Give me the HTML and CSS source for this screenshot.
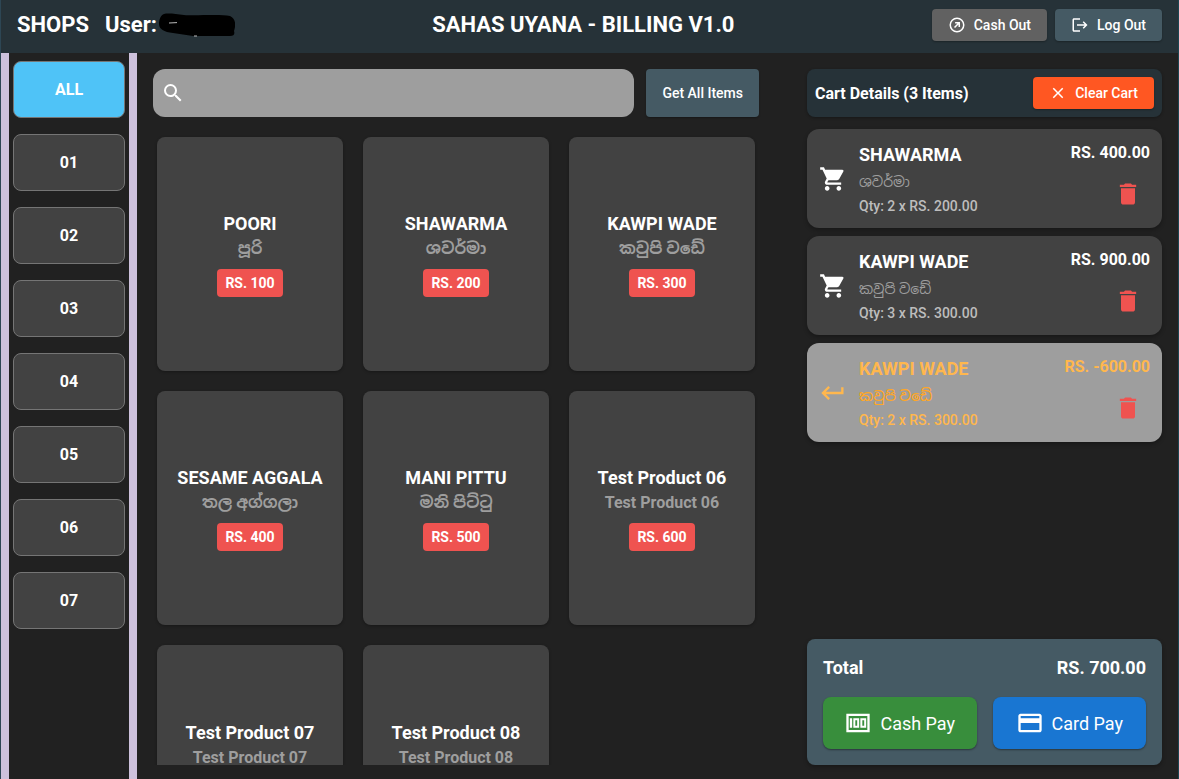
FILE: index.html
```html
<!DOCTYPE html>
<html lang="en">
<head>
    <meta charset="UTF-8">
    <meta name="viewport" content="width=device-width, initial-scale=1.0">
    <title>Sahas Uyana - Billing</title>
    <link rel="stylesheet" href="styles.css">
</head>
<body>
    <svg class="sprite" aria-hidden="true">
        <symbol id="cart" viewBox="0 0 24 24"><path d="M7 18c-1.1 0-1.99.9-1.99 2S5.9 22 7 22s2-.9 2-2-.9-2-2-2zM1 2v2h2l3.6 7.59-1.35 2.45c-.16.28-.25.61-.25.96 0 1.1.9 2 2 2h12v-2H7.42c-.14 0-.25-.11-.25-.25l.03-.12.9-1.63h7.45c.75 0 1.41-.41 1.75-1.03l3.58-6.49A1 1 0 0 0 20 4H5.21l-.94-2H1zm16 16c-1.1 0-1.99.9-1.99 2s.89 2 1.99 2 2-.9 2-2-.9-2-2-2z"/></symbol>
        <symbol id="trash" viewBox="0 0 24 24"><path d="M6 19c0 1.1.9 2 2 2h8c1.1 0 2-.9 2-2V7H6v12zM19 4h-3.500l-1-1h-5l-1 1H5v2h14V4z"/></symbol>
        <symbol id="return" viewBox="0 0 24 24"><path d="M19 7v4H5.830l3.580-3.590L8 6l-6 6 6 6 1.410-1.410L5.830 13H21V7z"/></symbol>
    </svg>

    <header class="topbar">
        <div class="user">
            <span>SHOPS</span>
            <span>User:</span>
            <svg class="scribble" viewBox="0 0 76 24" aria-hidden="true">
                <path d="M5 1C2 2 0 6 0 11c0 5 5 8 14 9l20 3h37c4 0 5-2 4-5 2-6 2-12-4-15-10-2-35 0-46-1C17 1 9 0 5 1z"/>
                <path d="M10 10l8-.4M35 23h3" stroke="#bbb" fill="none"/>
            </svg>
        </div>
        <h1 class="title">SAHAS UYANA - BILLING V1.0</h1>
        <div class="actions">
            <button class="btn grey">
                <svg class="icon" viewBox="0 0 24 24"><path d="M12 2a10 10 0 1 0 0 20 10 10 0 0 0 0-20zm0 18a8 8 0 1 1 0-16 8 8 0 0 1 0 16zM9.500 8H16v6.500h-2v-3.100L9.400 16 8 14.600l4.600-4.600H9.500z"/></svg>
                Cash Out
            </button>
            <button class="btn slate">
                <svg class="icon" viewBox="0 0 24 24"><path d="M17 7l-1.410 1.410L18.170 11H8v2h10.170l-2.580 2.580L17 17l5-5zM4 5h8V3H4c-1.100 0-2 .9-2 2v14c0 1.100.9 2 2 2h8v-2H4z"/></svg>
                Log Out
            </button>
        </div>
    </header>

    <div class="layout">
        <nav class="shops">
            <button class="shop active">ALL</button>
            <button class="shop">01</button>
            <button class="shop">02</button>
            <button class="shop">03</button>
            <button class="shop">04</button>
            <button class="shop">05</button>
            <button class="shop">06</button>
            <button class="shop">07</button>
        </nav>

        <main class="items">
            <div class="search-row">
                <label class="search">
                    <svg viewBox="0 0 24 24"><path d="M15.500 14h-.79l-.28-.27A6.470 6.470 0 0 0 16 9.500 6.500 6.500 0 1 0 9.500 16c1.610 0 3.090-.59 4.230-1.570l.27.28v.79l5 4.990L20.490 19l-4.990-5zm-6 0a4.500 4.500 0 1 1 0-9 4.500 4.500 0 0 1 0 9z"/></svg>
                    <input type="text" aria-label="Search items">
                </label>
                <button class="btn slate get-all">Get All Items</button>
            </div>
            <div class="products">
                <button class="product"><span class="name">POORI</span><span class="local" lang="si">පූරි</span><span class="price">RS. 100</span></button>
                <button class="product"><span class="name">SHAWARMA</span><span class="local" lang="si">ශවර්මා</span><span class="price">RS. 200</span></button>
                <button class="product"><span class="name">KAWPI WADE</span><span class="local" lang="si">කවුපි වඩේ</span><span class="price">RS. 300</span></button>
                <button class="product"><span class="name">SESAME AGGALA</span><span class="local" lang="si">තල අග්ගලා</span><span class="price">RS. 400</span></button>
                <button class="product"><span class="name">MANI PITTU</span><span class="local" lang="si">මනි පිට්ටු</span><span class="price">RS. 500</span></button>
                <button class="product"><span class="name">Test Product 06</span><span class="local">Test Product 06</span><span class="price">RS. 600</span></button>
                <button class="product"><span class="name">Test Product 07</span><span class="local">Test Product 07</span><span class="price"></span></button>
                <button class="product"><span class="name">Test Product 08</span><span class="local">Test Product 08</span><span class="price"></span></button>
            </div>
        </main>

        <aside class="cart">
            <div class="cart-head">
                <h2>Cart Details (3 Items)</h2>
                <button class="btn orange">
                    <svg class="icon" viewBox="0 0 24 24"><path d="M19 6.410L17.590 5 12 10.590 6.410 5 5 6.410 10.590 12 5 17.590 6.410 19 12 13.410 17.590 19 19 17.590 13.410 12z"/></svg>
                    Clear Cart
                </button>
            </div>
            <ul class="cart-list">
                <li class="cart-item">
                    <svg class="icon-lg"><use href="#cart"/></svg>
                    <div class="info">
                        <span class="name">SHAWARMA</span>
                        <span class="local" lang="si">ශවර්මා</span>
                        <span class="qty">Qty: 2 x RS. 200.00</span>
                    </div>
                    <div class="side">
                        <span class="amount">RS. 400.00</span>
                        <button class="delete" aria-label="Remove"><svg class="icon-lg"><use href="#trash"/></svg></button>
                    </div>
                </li>
                <li class="cart-item">
                    <svg class="icon-lg"><use href="#cart"/></svg>
                    <div class="info">
                        <span class="name">KAWPI WADE</span>
                        <span class="local" lang="si">කවුපි වඩේ</span>
                        <span class="qty">Qty: 3 x RS. 300.00</span>
                    </div>
                    <div class="side">
                        <span class="amount">RS. 900.00</span>
                        <button class="delete" aria-label="Remove"><svg class="icon-lg"><use href="#trash"/></svg></button>
                    </div>
                </li>
                <li class="cart-item returned">
                    <svg class="icon-lg"><use href="#return"/></svg>
                    <div class="info">
                        <span class="name">KAWPI WADE</span>
                        <span class="local" lang="si">කවුපි වඩේ</span>
                        <span class="qty">Qty: 2 x RS. 300.00</span>
                    </div>
                    <div class="side">
                        <span class="amount">RS. -600.00</span>
                        <button class="delete" aria-label="Remove"><svg class="icon-lg"><use href="#trash"/></svg></button>
                    </div>
                </li>
            </ul>
            <div class="checkout">
                <div class="total"><span>Total</span><span>RS. 700.00</span></div>
                <div class="pay-row">
                    <button class="pay green">
                        <svg class="icon-lg" viewBox="0 0 24 24"><path fill-rule="evenodd" d="M2 4h20v16H2zM4 6v12h16V6zM5 8h2v8H5zM8 8h5v8H8zM9.700 9.700v4.600h1.600V9.700zM14 8h5v8h-5zM15.700 9.700v4.600h1.600V9.700z"/></svg>
                        Cash Pay
                    </button>
                    <button class="pay blue">
                        <svg class="icon-lg" viewBox="0 0 24 24"><path d="M20 4H4c-1.110 0-1.990.89-1.990 2L2 18c0 1.110.89 2 2 2h16c1.110 0 2-.89 2-2V6c0-1.110-.89-2-2-2zm0 14H4v-6h16v6zm0-10H4V6h16v2z"/></svg>
                        Card Pay
                    </button>
                </div>
            </div>
        </aside>
    </div>
</body>
</html>
```
FILE: styles.css
```css
* {
    box-sizing: border-box;
}

body {
    margin: 0;
    height: 100vh;
    display: flex;
    flex-direction: column;
    font-family: Roboto, "Noto Sans Sinhala", "Noto Sans", sans-serif;
    font-size: 14px;
    color: white;
    background-color: #212121;
    border-left: 1px solid #2d4654;
    border-right: 1px solid #1c4652;
    overflow: hidden;
}

button {
    font: inherit;
    color: inherit;
    border: none;
    cursor: pointer;
}

svg {
    fill: currentColor;
    flex: none;
}

h1,
h2 {
    margin: 0;
}

.sprite {
    display: none;
}

.icon {
    width: 18px;
    height: 18px;
}

.icon-lg {
    width: 28px;
    height: 28px;
}

/* header */
.topbar {
    display: flex;
    justify-content: space-between;
    align-items: center;
    height: 53px;
    padding: 0 16px 4px;
    background-color: #263238;
    flex: none;
}

.user {
    display: flex;
    align-items: center;
    gap: 16px;
    font-size: 22px;
    font-weight: 700;
}

.scribble {
    width: 76px;
    height: 24px;
    margin-left: -14px;
    fill: black;
}

.title {
    font-size: 22px;
    font-weight: 700;
}

.actions {
    display: flex;
    justify-content: flex-end;
    gap: 8px;
}

.btn {
    display: flex;
    align-items: center;
    justify-content: center;
    gap: 8px;
    height: 32px;
    padding: 0 16px;
    font-weight: 500;
    border-radius: 4px;
    white-space: nowrap;
    box-shadow: 0 1px 2px rgba(0, 0, 0, 0.3);
}

.grey {
    background-color: #616161;
}

.slate {
    background-color: #455a64;
}

.orange {
    background-color: #ff5722;
}

.green {
    background-color: #388e3c;
}

.blue {
    background-color: #1976d2;
}

/* columns */
.layout {
    flex: 1;
    min-height: 0;
    display: grid;
    grid-template-columns: 136px 1.69fr 1fr;
    grid-template-rows: 100%;
}

.shops {
    display: flex;
    flex-direction: column;
    gap: 16px;
    padding: 8px 4px;
    border-left: 8px solid #cdc1dc;
    border-right: 8px solid #cdc1dc;
}

.shop {
    height: 57px;
    font-size: 16px;
    font-weight: 700;
    background-color: #424242;
    border: 1px solid #757575;
    border-radius: 8px;
}

.shop.active {
    background-color: #4fc3f7;
}

/* items */
.items {
    display: flex;
    flex-direction: column;
    gap: 16px;
    padding: 16px 16px 14px;
    margin-right: 16px;
}

.search-row {
    display: flex;
    gap: 12px;
}

.search {
    flex: 1;
    display: flex;
    align-items: center;
    height: 48px;
    padding: 0 8px;
    border-radius: 12px;
    background-color: #9e9e9e;
}

.search svg {
    width: 24px;
    height: 24px;
}

.search input {
    flex: 1;
    min-width: 0;
    font: inherit;
    color: inherit;
    background: none;
    border: none;
    outline: none;
}

.get-all {
    height: 48px;
}

.products {
    flex: 1;
    min-height: 0;
    display: grid;
    grid-template-columns: repeat(3, 1fr);
    align-content: start;
    gap: 20px;
    padding: 4px 4px 0;
    overflow: hidden;
}

.product {
    display: flex;
    flex-direction: column;
    align-items: center;
    justify-content: center;
    aspect-ratio: 27 / 34;
    padding: 0;
    border-radius: 8px;
    background-color: #424242;
    box-shadow: 0 1px 3px rgba(0, 0, 0, 0.3);
}

.name {
    font-size: 18px;
    font-weight: 700;
    line-height: 26px;
}

.local {
    font-size: 16px;
    line-height: 24px;
    color: #9e9e9e;
}

.product .local {
    font-weight: 700;
}

.price {
    min-height: 28px;
    margin-top: 8px;
    padding: 0 8px;
    font-weight: 700;
    line-height: 28px;
    border-radius: 4px;
    background-color: #ef5350;
}

/* cart */
.cart {
    display: flex;
    flex-direction: column;
    gap: 12px;
    padding: 16px 16px 14px;
}

.cart-head {
    display: flex;
    align-items: center;
    justify-content: space-between;
    height: 48px;
    padding: 0 8px;
    border-radius: 8px;
    background-color: #263238;
    box-shadow: 0 1px 3px rgba(0, 0, 0, 0.3);
}

.cart-head h2 {
    font-size: 16px;
    font-weight: 700;
}

.cart-list {
    flex: 1;
    display: flex;
    flex-direction: column;
    gap: 8px;
    margin: 0;
    padding: 0;
    list-style: none;
}

.cart-item {
    display: flex;
    align-items: center;
    gap: 12px;
    height: 99px;
    padding: 12px;
    border-radius: 12px;
    background-color: #424242;
    box-shadow: 0 2px 4px rgba(0, 0, 0, 0.3);
}

.info {
    flex: 1;
    display: flex;
    flex-direction: column;
}

.cart-item .local {
    font-size: 14px;
    line-height: 28px;
}

.qty {
    font-weight: 500;
    line-height: 20px;
    color: #bdbdbd;
}

.side {
    display: flex;
    flex-direction: column;
    align-items: flex-end;
}

.amount {
    font-size: 16px;
    font-weight: 700;
    line-height: 22px;
}

.delete {
    display: flex;
    padding: 16px 8px 8px;
    color: #ef5350;
    background: none;
}

.returned {
    color: #ffb74d;
    background-color: #9e9e9e;
}

.returned .qty {
    color: #ffb74d;
}

.returned .local {
    color: #ffa726;
    font-weight: 500;
}

.checkout {
    padding: 16px;
    border-radius: 8px;
    background-color: #455a64;
    box-shadow: 0 2px 4px rgba(0, 0, 0, 0.3);
}

.total {
    display: flex;
    justify-content: space-between;
    font-size: 18px;
    font-weight: 700;
    line-height: 26px;
}

.pay-row {
    display: grid;
    grid-template-columns: 1fr 1fr;
    gap: 16px;
    margin-top: 16px;
}

.pay {
    display: flex;
    align-items: center;
    justify-content: center;
    gap: 8px;
    height: 52px;
    padding: 0;
    font-size: 18px;
    border-radius: 8px;
    box-shadow: 0 1px 2px rgba(0, 0, 0, 0.4);
}
```
